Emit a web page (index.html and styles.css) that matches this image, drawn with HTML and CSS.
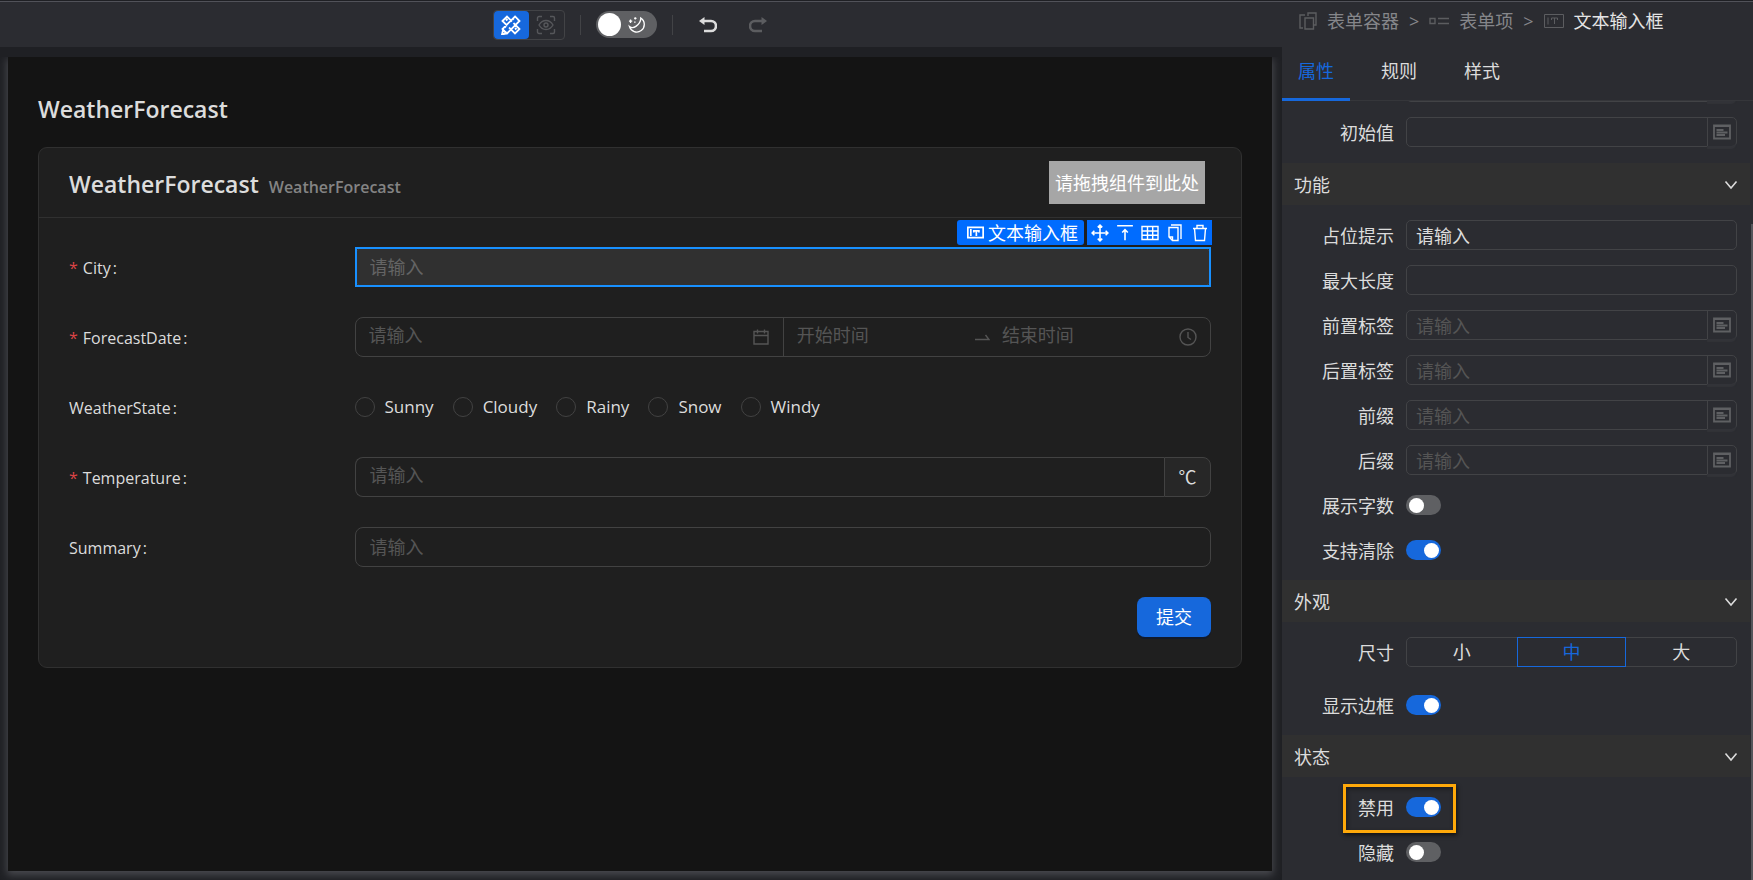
FILE: index.html
```
<!DOCTYPE html>
<html lang="zh-CN">
<head>
<meta charset="utf-8">
<title>WeatherForecast</title>
<link rel="stylesheet" href="styles.css">
</head>
<body>
<svg class="defs" aria-hidden="true">
  <symbol id="i-note" viewBox="0 0 18 16"><path d="M1 1.500h16v13H1zM1 2h16M3.500 6h7M3.500 8.500h11M3.500 11h8.500"/></symbol>
  <symbol id="i-down" viewBox="0 0 14 10"><path d="M1.500 1.500 7 8l5.500-6.500"/></symbol>
  <symbol id="i-text" viewBox="0 0 20 14"><path d="M.5.500h19v13H.5zM4 3.500v7M7.500 4h6M10.500 4v6M7.500 4v2M13.500 4v2"/></symbol>
</svg>
<div class="app">
  <main class="main">
    <header class="toolbar">
      <div class="modes">
        <button class="mode mode-on" aria-label="设计"><svg viewBox="0 0 20 20"><path d="M14 1.500 18.500 6 6 18.500 1.500 14zM1.500 6 6 1.500 18.500 14 14 18.500zM12 4l1.500 1.500M4 12l1.500 1.500M6.500 4 5 5.500M15.500 13 14 14.500M1 19.500l1-4.500 3.500 3.500z"/><path class="cut" d="M15 4 4 15"/></svg></button>
        <button class="mode" aria-label="预览"><svg viewBox="0 0 20 20"><path d="M1.500 6V3a1.500 1.500 0 0 1 1.500-1.500h3M14 1.500h3A1.500 1.500 0 0 1 18.500 3v3M18.500 14v3a1.500 1.500 0 0 1-1.500 1.500h-3M6 18.500H3A1.500 1.500 0 0 1 1.500 17v-3M3 10c3.500-6 10.500-6 14 0-3.500 6-10.500 6-14 0z"/><circle cx="10" cy="10" r="2"/></svg></button>
      </div>
      <span class="bar"></span>
      <label class="theme"><input type="checkbox" role="switch" aria-label="主题"><svg viewBox="0 0 18 18"><path d="M13.500 2.200A8 8 0 1 1 1.500 11c1.800 1.500 4.500 1.800 6.800 0 2-1.600 5.400-4 5.200-8.800zM1 5.500h3.500M2.700 3.700v3.600M6.500 2.500h2.500M7.700 1.200v2.600M6.500 6.500h1.500"/></svg></label>
      <span class="bar"></span>
      <button class="hist" aria-label="撤销"><svg viewBox="0 0 18 16"><path d="M3 4h9a4.700 4.700 0 0 1 0 10H5"/><path class="fill" d="M0 4 5.500 0v8z"/></svg></button>
      <button class="hist hist-off" aria-label="重做"><svg viewBox="0 0 18 16"><path d="M15 4H6a4.700 4.700 0 0 0 0 10h7"/><path class="fill" d="M18 4 12.500 0v8z"/></svg></button>
    </header>
    <div class="stage">
      <div class="page">
        <h1 class="title">WeatherForecast</h1>
        <section class="card">
          <div class="card-head">
            <h2 class="title">WeatherForecast</h2>
            <span class="subtitle">WeatherForecast</span>
            <div class="drop">请拖拽组件到此处</div>
          </div>
          <form class="form">
            <div class="row">
              <label class="req" for="city">City</label>
              <div class="selected">
                <input class="box" id="city" placeholder="请输入" disabled>
                <div class="actions">
                  <span class="tag"><svg class="ico" viewBox="0 0 20 14"><path d="M1 1h18v12H1zM4.500 3v8M8 5h6M11 5v6M8 4v3M14 4v3"/></svg>文本输入框</span>
                  <span class="tools">
                    <button type="button" aria-label="移动"><svg viewBox="0 0 16 16"><path d="M8 1v14M1 8h14M6 3l2-2 2 2M6 13l2 2 2-2M3 6 1 8l2 2M13 6l2 2-2 2"/></svg></button>
                    <button type="button" aria-label="选择上级"><svg viewBox="0 0 16 16"><path d="M1 1.500h14M8 14.500V5M5.500 7.500 8 5l2.500 2.500"/></svg></button>
                    <button type="button" aria-label="表格"><svg viewBox="0 0 18 16"><path d="M1 1.500h16v13H1zM1 6h16M1 10.300h16M6.500 1.500v13M11.700 1.500v13"/></svg></button>
                    <button type="button" aria-label="复制"><svg viewBox="0 0 16 18"><path d="M2 3.500h9v13H5.500L2 13zM2 13h3.500v3.500M4 1h10v14"/></svg></button>
                    <button type="button" aria-label="删除"><svg viewBox="0 0 16 18"><path d="M1 4.500h14M5 4V1.500h6V4M2.500 4.500l1 12h9l1-12"/></svg></button>
                  </span>
                </div>
              </div>
            </div>
            <div class="row">
              <label class="req" for="date">ForecastDate</label>
              <div class="dates">
                <div class="date"><input id="date" placeholder="请输入"><svg class="dim" viewBox="0 0 16 16"><path d="M1 2.500h14v12.500H1zM1 6.500h14M4.500.5v4M11.500.5v4"/></svg></div>
                <div class="date range"><input aria-label="开始时间" placeholder="开始时间"><svg class="dim arrow" viewBox="0 0 16 8"><path d="M1 6.500h14L11.500 2"/></svg><input class="end" aria-label="结束时间" placeholder="结束时间"><svg class="dim clock" viewBox="0 0 18 18"><circle cx="9" cy="9" r="8"/><path d="M9 4v5.500l3 2"/></svg></div>
              </div>
            </div>
            <div class="row" role="radiogroup" aria-label="WeatherState">
              <span class="name">WeatherState</span>
              <div class="radios">
                <label><input type="radio" name="w">Sunny</label>
                <label><input type="radio" name="w">Cloudy</label>
                <label><input type="radio" name="w">Rainy</label>
                <label><input type="radio" name="w">Snow</label>
                <label><input type="radio" name="w">Windy</label>
              </div>
            </div>
            <div class="row">
              <label class="req" for="temp">Temperature</label>
              <div class="group"><input class="box" id="temp" placeholder="请输入"><span class="unit">℃</span></div>
            </div>
            <div class="row">
              <label class="name" for="sum">Summary</label>
              <input class="box" id="sum" placeholder="请输入">
            </div>
            <button class="submit" type="button">提交</button>
          </form>
        </section>
      </div>
    </div>
  </main>
  <aside class="side">
    <nav class="crumbs">
      <svg class="c-box" viewBox="0 0 18 18"><path d="M6 6h8.500v11H6zM9 4V1h8v12h-2M6 3H1v13h3"/></svg><a href="#">表单容器</a><span class="sep">&gt;</span>
      <svg class="c-item" viewBox="0 0 20 8"><path d="M1 1.500h5v5H1zM9 1.500h11M9 6.500h11"/></svg><a href="#">表单项</a><span class="sep">&gt;</span>
      <svg class="c-text"><use href="#i-text"/></svg><a href="#" class="here">文本输入框</a>
    </nav>
    <div class="tabs" role="tablist">
      <button class="tab tab-on" role="tab" aria-selected="true">属性</button>
      <button class="tab" role="tab">规则</button>
      <button class="tab" role="tab">样式</button>
    </div>
    <div class="scroll">
      <div class="props props-first">
        <div class="prop"><span></span><div class="combo"><input aria-label="标识"><button aria-label="编辑"><svg><use href="#i-note"/></svg></button></div></div>
        <div class="prop"><label for="p0">初始值</label><div class="combo"><input id="p0"><button aria-label="编辑"><svg><use href="#i-note"/></svg></button></div></div>
      </div>
      <button class="section">功能<svg><use href="#i-down"/></svg></button>
      <div class="props">
        <div class="prop"><label for="p1">占位提示</label><div class="combo"><input id="p1" value="请输入"></div></div>
        <div class="prop"><label for="p2">最大长度</label><div class="combo"><input id="p2"></div></div>
        <div class="prop"><label for="p3">前置标签</label><div class="combo"><input id="p3" placeholder="请输入"><button aria-label="编辑"><svg><use href="#i-note"/></svg></button></div></div>
        <div class="prop"><label for="p4">后置标签</label><div class="combo"><input id="p4" placeholder="请输入"><button aria-label="编辑"><svg><use href="#i-note"/></svg></button></div></div>
        <div class="prop"><label for="p5">前缀</label><div class="combo"><input id="p5" placeholder="请输入"><button aria-label="编辑"><svg><use href="#i-note"/></svg></button></div></div>
        <div class="prop"><label for="p6">后缀</label><div class="combo"><input id="p6" placeholder="请输入"><button aria-label="编辑"><svg><use href="#i-note"/></svg></button></div></div>
        <div class="prop"><label for="s1">展示字数</label><input class="switch" type="checkbox" role="switch" id="s1"></div>
        <div class="prop"><label for="s2">支持清除</label><input class="switch" type="checkbox" role="switch" id="s2" checked></div>
      </div>
      <button class="section">外观<svg><use href="#i-down"/></svg></button>
      <div class="props">
        <div class="prop prop-size"><span class="plabel">尺寸</span><div class="sizes"><button>小</button><button class="size-on">中</button><button>大</button></div></div>
        <div class="prop"><label for="s3">显示边框</label><input class="switch" type="checkbox" role="switch" id="s3" checked></div>
      </div>
      <button class="section">状态<svg><use href="#i-down"/></svg></button>
      <div class="props">
        <div class="prop marked"><label for="s4">禁用</label><input class="switch" type="checkbox" role="switch" id="s4" checked></div>
        <div class="prop"><label for="s5">隐藏</label><input class="switch" type="checkbox" role="switch" id="s5"></div>
      </div>
    </div>
  </aside>
</div>
</body>
</html>
```
FILE: styles.css
```
*, ::before, ::after { box-sizing: border-box; }
body {
  margin: 0;
  background: #2b2c31;
  color: #dcdcdc;
  font: 17px/28px "Open Sans", "Noto Sans CJK SC", sans-serif;
}
button, input { font: inherit; color: inherit; margin: 0; }
button { padding: 0; border: 0; background: none; }
a { color: inherit; text-decoration: none; }
svg { fill: none; stroke: currentColor; stroke-width: 1.4; flex: none; }
.defs { position: absolute; width: 0; height: 0; }
.app { display: flex; height: 100vh; border-top: 1px solid #1f2024; overflow: hidden; }
.main { flex: 1; display: flex; flex-direction: column; min-width: 0; }

/* Top bar */
.toolbar {
  display: flex; align-items: center; justify-content: center;
  height: 46px; padding-right: 23px; border-top: 1px solid #515259;
}
.modes { display: flex; border: 1px solid #424346; border-radius: 4px; }
.mode { display: grid; place-items: center; width: 35px; height: 28px; color: #56575b; }
.mode svg { width: 20px; height: 20px; }
.mode-on { background: #1668dc; color: #fff; border-radius: 4px; }
.mode-on svg { stroke-width: 1.8; }
.cut { stroke: #1668dc; stroke-width: 2; }
.bar { width: 1px; height: 20px; margin: 0 15px; background: #424346; }
.theme {
  display: flex; align-items: center; justify-content: space-between;
  width: 61px; height: 27px; padding: 0 12px 0 2px; border-radius: 14px; background: #5f6063; color: #fff;
}
.theme input { appearance: none; width: 23px; height: 23px; border-radius: 50%; background: #fff; }
.theme svg { width: 17px; height: 17px; }
.hist { width: 18px; height: 16px; margin-left: 11px; color: #dcdcdc; }
.hist svg { display: block; width: 18px; height: 16px; stroke-width: 2.6; }
.hist .fill { fill: currentColor; stroke: none; }
.hist-off { margin-left: 32px; color: #5c5d60; }

/* Canvas */
.stage { flex: 1; padding: 10px 10px 9px 8px; background: #1f2024; }
.page { height: 100%; padding: 30px; background: #141414; box-shadow: 0 3px 8px 1px #4a4b50; clip-path: inset(0 -10px -9px -8px); }
.title { margin: 0; padding-top: 2px; font-size: 23px; line-height: 40px; font-weight: 600; }
.card { margin-top: 18px; border: 1px solid #303030; border-radius: 9px; background: #1f1f1f; }
.card-head { display: flex; align-items: center; height: 70px; padding: 0 36px 0 30px; border-bottom: 1px solid #303030; }
.subtitle { margin: 8px 0 0 10px; font-size: 16px; font-weight: 600; color: #848484; }
.drop { margin-left: auto; padding: 8px 6px 7px; background: #a6a6a6; color: #fff; font-size: 18px; }
.form { display: flex; flex-direction: column; gap: 30px; padding: 29px 30px 30px; }
.row { display: grid; grid-template-columns: 1fr 3fr; align-items: center; min-height: 40px; }
.req, .name { padding-top: 2px; font-size: 16px; }
.req::before { content: "*"; margin-right: 5px; color: #dc4446; }
.req::after, .name::after { content: ":"; margin-left: 2px; }
.box {
  width: 100%; min-width: 0; height: 40px; padding: 0 14px;
  background: transparent; border: 1px solid #424242; border-radius: 8px; font-size: 18px;
}
::placeholder { color: #555; opacity: 1; }
.selected { position: relative; outline: 2px solid #1890ff; outline-offset: -2px; height: 40px; }
.selected .box { background: #303030; }
.selected ::placeholder { color: #646464; }
.actions { position: absolute; right: -1px; bottom: 42px; display: flex; gap: 3px; height: 25px; color: #fff; }
.tag { display: flex; align-items: center; gap: 4px; padding: 0 6px 0 10px; border-radius: 3px; background: #006cff; font-size: 18px; }
.ico { width: 17px; height: 13px; stroke-width: 2; }
.tools { display: flex; background: #006cff; }
.tools button { display: grid; place-items: center; width: 25px; }
.tools svg { width: 18px; height: 18px; }
.dates { display: flex; border: 1px solid #424242; border-radius: 8px; height: 40px; }
.date { flex: 1; display: flex; align-items: center; padding: 0 14px 4px 13px; min-width: 0; }
.date input { flex: 1; min-width: 0; padding: 0; border: 0; background: none; font-size: 18px; }
.range { border-left: 1px solid #424242; height: 38px; padding-right: 13px; }
.dim { width: 16px; height: 16px; margin-top: 4px; color: #555; }
.arrow { height: 8px; }
.date .end { padding-left: 12px; }
.clock { width: 18px; height: 18px; }
.radios { display: flex; gap: 19px; }
.radios label { display: flex; align-items: center; gap: 10px; }
.radios input { appearance: none; width: 20px; height: 20px; border: 1px solid #424242; border-radius: 50%; }
.group { display: flex; }
.group .box { flex: 1; padding-bottom: 4px; border-radius: 8px 0 0 8px; border-right: 0; }
.unit { width: 47px; height: 40px; line-height: 38px; text-align: center; border: 1px solid #424242; border-radius: 0 8px 8px 0; background: #272727; font-size: 18px; }
.submit { align-self: flex-end; width: 74px; height: 40px; border-radius: 8px; background: #1668dc; color: #fff; font-size: 18px; box-shadow: 0 2px 0 #111a2c; }

/* Property panel */
.side { display: flex; flex-direction: column; width: 471px; font-size: 18px; border-top: 1px solid #515259; }
.crumbs { display: flex; align-items: center; gap: 10px; height: 40px; padding: 0 0 2px 17px; color: #85868a; white-space: nowrap; }
.crumbs svg { color: #5c5d60; }
.sep { font-size: 18px; }
.c-box { width: 18px; height: 18px; }
.c-item, .c-text { width: 20px; height: 8px; }
.c-text { height: 14px; stroke-width: 1; }
.here { color: #e4e4e4; }
.tabs { display: flex; gap: 15px; height: 59px; border-bottom: 1px solid #35363a; }
.tab { width: 68px; height: 59px; padding-top: 2px; border-bottom: 3px solid transparent; }
.tab-on { color: #1668dc; border-color: #1668dc; }
.scroll { flex: 1; overflow: hidden; padding-right: 3px; background: linear-gradient(#54555a, #54555a) right 123px / 2px 800px no-repeat; }
.section { display: flex; align-items: center; justify-content: space-between; width: 100%; height: 42px; padding: 2px 12px 0; background: #303030; border: 0; }
.section svg { width: 14px; height: 10px; stroke-width: 1.6; }
.props { display: flex; flex-direction: column; gap: 15px; padding: 15px 13px 15px 0; }
/* The list is scrolled so that the first row is almost out of view. */
.props-first { margin-top: -44px; padding-bottom: 16px; }
.prop { display: grid; grid-template-columns: 112px 1fr; column-gap: 12px; align-items: center; height: 30px; position: relative; }
.prop label, .plabel { padding-top: 2px; text-align: right; }
.prop-size { margin-bottom: 8px; }
.combo { display: flex; height: 30px; border: 1px solid #424346; border-radius: 5px; }
.combo input { flex: 1; min-width: 0; padding: 2px 9px 0; border: 0; background: none; }
.combo button { display: grid; place-items: center; width: 29px; border-left: 1px solid #424346; color: #5f6063; box-shadow: 0 3px 1px #323338; border-radius: 0 0 5px 0; }
.combo svg { width: 18px; height: 16px; stroke-width: 1.8; }
.switch { appearance: none; display: flex; align-items: center; width: 35px; height: 20px; padding: 0 2px 0 3px; border-radius: 10px; background: #5f6063; }
.switch::before { content: ""; width: 15px; height: 15px; border-radius: 50%; background: #fff; }
.switch:checked { justify-content: flex-end; background: #1668dc; }
.sizes { display: grid; grid-template-columns: 1fr 1fr 1fr; height: 30px; border: 1px solid #424346; border-radius: 5px; }
.size-on { margin: -1px 0; border: 1px solid #1668dc; color: #1668dc; }
.marked::after {
  content: ""; position: absolute; left: 61px; top: -8px; width: 113px; height: 49px;
  border: 3px solid #ffa90a; box-shadow: 1px 2px 4px #111, inset 1px 2px 4px #1b1b1e;
}
```
